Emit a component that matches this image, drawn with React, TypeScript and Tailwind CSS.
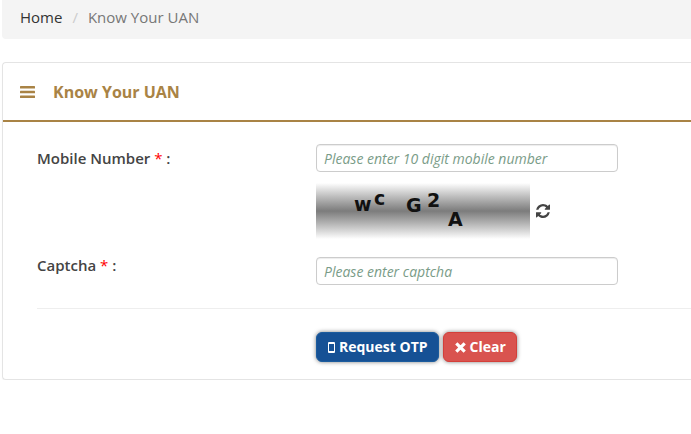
import { useState } from 'react'

function BarsIcon() {
  return (
    <svg width="15" height="12" viewBox="0 0 15 12" fill="currentColor" aria-hidden="true">
      <rect width="15" height="2.400" rx="0.5" />
      <rect y="4.800" width="15" height="2.400" rx="0.5" />
      <rect y="9.600" width="15" height="2.400" rx="0.5" />
    </svg>
  )
}

function RefreshIcon() {
  return (
    <svg width="14" height="14" viewBox="0 128 1536 1536" fill="currentColor" aria-hidden="true">
      <path d="M1511 1056q0 5-1 7-64 268-268 434.500t-478 166.500q-146 0-282.500-55t-243.500-157l-129 129q-19 19-45 19t-45-19-19-45v-448q0-26 19-45t45-19h448q26 0 45 19t19 45-19 45l-137 137q71 66 161 102t187 36q134 0 250-65t186-179q11-17 53-117 8-23 30-23h192q13 0 22.500 9.500t9.500 22.500zm25-800v448q0 26-19 45t-45 19h-448q-26 0-45-19t-19-45 19-45l138-138q-148-137-349-137-134 0-250 65t-186 179q-11 17-53 117-8 23-30 23h-199q-13 0-22.500-9.500t-9.500-22.500v-7q65-268 270-434.500t480-166.500q146 0 284 55.500t245 156.500l130-129q19-19 45-19t45 19 19 45z" />
    </svg>
  )
}

function PhoneIcon() {
  return (
    <svg width="7" height="11" viewBox="0 0 7 11" aria-hidden="true">
      <path fill="currentColor" fillRule="evenodd" d="M1 0h5a1 1 0 0 1 1 1v9a1 1 0 0 1-1 1H1a1 1 0 0 1-1-1V1a1 1 0 0 1 1-1zM1 2v7h5V2z" />
    </svg>
  )
}

function TimesIcon() {
  return (
    <svg width="11" height="11" viewBox="0 0 11 11" aria-hidden="true">
      <path stroke="currentColor" strokeWidth="3.200" d="M1.300 1.300l8.400 8.400M9.700 1.300l-8.400 8.400" />
    </svg>
  )
}

function CaptchaImage() {
  return (
    <svg width="214" height="56" role="img" aria-label="Captcha image" fill="#111" className="bg-linear-to-b from-white via-[#7c7c7c] to-white font-['DejaVu_Sans',sans-serif] text-[19px] font-bold">
      <text x="38" y="28">w</text>
      <text x="58" y="22">c</text>
      <text x="90" y="29">G</text>
      <text x="111" y="24">2</text>
      <text x="132" y="43">A</text>
    </svg>
  )
}

const inputClass =
  'block h-7 w-full max-w-[302px] rounded-[4px] border border-[#ccc] bg-white px-[7px] text-[14px] text-[#444] shadow-[inset_0_1px_1px_rgba(0,0,0,0.075)] placeholder:italic placeholder:text-[#7a9c88] focus:outline-none focus:border-[#66afe9]'

const buttonClass =
  'flex h-[30px] items-center gap-1 rounded-[6px] border pr-[10px] pl-[11px] text-[14px] font-bold text-white shadow-[0_0_4px_rgba(0,0,0,0.5)]'

export default function App() {
  const [form, setForm] = useState({ mobile: '', captcha: '' })

  function handleChange(e: React.ChangeEvent<HTMLInputElement>) {
    setForm(f => ({ ...f, [e.target.name]: e.target.value }))
  }

  return (
    <div className="bg-white pl-[2px] font-['Open_Sans','Noto_Sans',sans-serif] text-[15px] leading-5 text-[#444]">
      <nav aria-label="Breadcrumb" className="rounded-bl-[4px] bg-[#f4f4f4] px-[18px] pt-[7px] pb-3">
        <ol className="flex">
          <li><a href="#" className="text-[#333]">Home</a></li>
          <li className="px-[10px] text-[#ccc]" aria-hidden="true">/</li>
          <li className="text-[#777]">Know Your UAN</li>
        </ol>
      </nav>

      <section className="mt-[23px] rounded-l-[4px] border border-r-0 border-[#e4e4e4] shadow-[0_1px_1px_rgba(0,0,0,0.05)]">
        <div className="flex items-center gap-[18px] border-b-2 border-[#a98345] px-[17px] pt-[19px] pb-[18px] text-[#a98345]">
          <BarsIcon />
          <h1 className="text-[16px] font-bold">Know Your UAN</h1>
        </div>

        <form onSubmit={e => e.preventDefault()} className="pt-[22px] pb-[17px] pl-[34px]">
          <div className="grid grid-cols-[279px_1fr]">
            <label htmlFor="mobile" className="pt-1 font-semibold">
              Mobile Number <span className="font-normal text-[#f00]">*</span> :
            </label>
            <div>
              <input id="mobile" name="mobile" value={form.mobile} onChange={handleChange}
                className={inputClass} placeholder="Please enter 10 digit mobile number" />
              <div className="mt-[11px] flex items-center gap-1.5">
                <CaptchaImage />
                <button type="button" aria-label="Refresh captcha"><RefreshIcon /></button>
              </div>
            </div>
          </div>

          <div className="mt-4 grid grid-cols-[279px_1fr]">
            <label htmlFor="captcha" className="font-semibold">
              Captcha <span className="font-normal text-[#f00]">*</span> :
            </label>
            <div className="pt-[2px]">
              <input id="captcha" name="captcha" value={form.captcha} onChange={handleChange}
                className={inputClass} placeholder="Please enter captcha" />
            </div>
          </div>

          <hr className="my-[23px] border-[#eee]" />

          <div className="flex gap-1 pl-[279px]">
            <button type="submit" className={`${buttonClass} border-[#1c5c9e] bg-[#165195]`}>
              <PhoneIcon />
              Request OTP
            </button>
            <button type="button" onClick={() => setForm({ mobile: '', captcha: '' })}
              className={`${buttonClass} border-[#d43f3a] bg-[#d9534f]`}>
              <TimesIcon />
              Clear
            </button>
          </div>
        </form>
      </section>
    </div>
  )
}
